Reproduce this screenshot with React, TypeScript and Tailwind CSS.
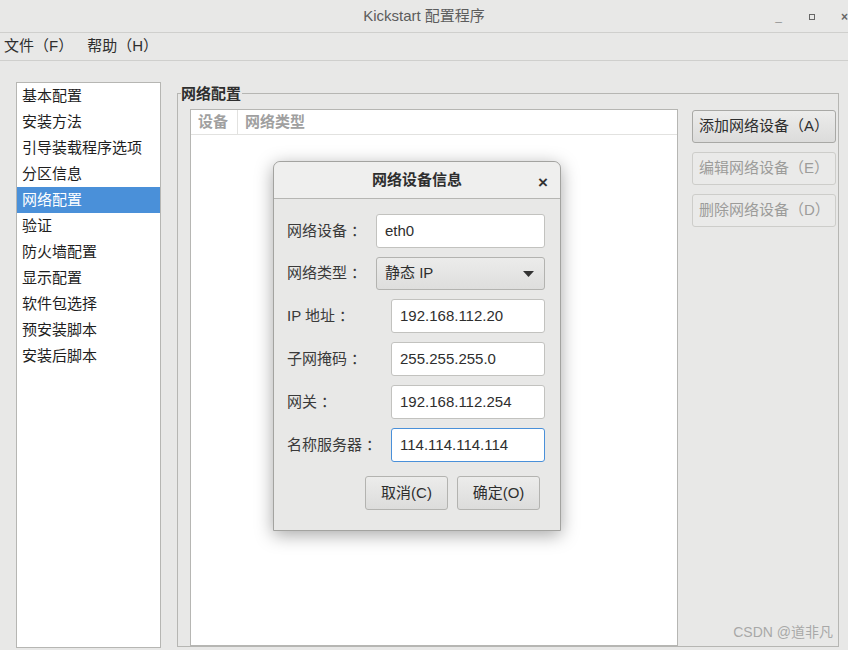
import React from "react";

const font = { fontFamily: '"Liberation Sans", "Noto Sans CJK SC", sans-serif' };

const sections = [
  "基本配置",
  "安装方法",
  "引导装载程序选项",
  "分区信息",
  "网络配置",
  "验证",
  "防火墙配置",
  "显示配置",
  "软件包选择",
  "预安装脚本",
  "安装后脚本",
];

const Field = ({ label, value, wide, focused }: { label: string; value: string; wide?: boolean; focused?: boolean }) => (
  <div className="flex items-center h-[34px]">
    <span className="flex-1 text-[15px] text-[#3a3a3a]">
      {label}
      <span className="ml-[4px]">：</span>
    </span>
    <div
      className={`h-[34px] ${wide ? "w-[169px]" : "w-[154px]"} bg-white rounded-[3px] border flex items-center pl-[8px] text-[15px] text-[#2e2e2e] ${
        focused ? "border-[#4a90d9]" : "border-[#c2c2bf]"
      }`}
    >
      {value}
    </div>
  </div>
);

export default function App() {
  return (
    <div className="relative w-[848px] h-[650px] overflow-hidden bg-[#e8e8e7] text-[#2e3436]" style={font}>
      {/* title bar */}
      <div className="relative h-[33px] border-b border-[#cfcfcd] flex items-center justify-center">
        <span className="text-[15px] text-[#5c5c5c]">Kickstart 配置程序</span>
        <div className="absolute -right-[13px] top-0 h-[33px] flex items-center text-[#666] text-[12px]">
          <span className="w-[33px] text-center font-bold">_</span>
          <span className="w-[33px] flex justify-center">
            <span className="block w-[6px] h-[6px] border-[1.5px] border-[#666]" />
          </span>
          <span className="w-[33px] text-center font-bold">×</span>
        </div>
      </div>

      {/* menu bar */}
      <div className="h-[28px] border-b border-[#cfcfcd] flex items-center gap-[14px] pl-[4px] text-[15px] text-[#2e2e2e]">
        <span>文件（F）</span>
        <span>帮助（H）</span>
      </div>

      {/* body */}
      <div className="flex pl-[16px] pt-[21px]">
        <div className="w-[145px] h-[566px] bg-white border border-[#b6b6b3]">
          {sections.map((s, i) => (
            <div
              key={s}
              className={`h-[26px] flex items-center pl-[5px] text-[15px] ${
                i === 4 ? "bg-[#4a90d9] text-white" : "text-[#1e1e1e]"
              }`}
            >
              {s}
            </div>
          ))}
        </div>

        <div className="relative ml-[16px] mt-[11px] w-[662px] h-[554px] border border-[#b6b6b3] flex pl-[12px] pt-[15px]">
          <span className="absolute -top-[11px] left-[3px] bg-[#e8e8e7] pr-[1px] text-[15px] font-bold text-[#2e2e2e]">
            网络配置
          </span>
          <div className="w-[488px] h-[538px] bg-white border border-[#b6b6b3] border-b-2">
            <div className="h-[25px] flex items-center border-b border-[#e2e2e0] text-[15px] font-bold text-[#a0a0a0]">
              <span className="w-[47px] h-full flex items-center pl-[7px] border-r border-[#e2e2e0]">设备</span>
              <span className="pl-[7px]">网络类型</span>
            </div>
          </div>
          <div className="ml-[14px] mt-[1px] w-[144px] flex flex-col gap-[9px]">
            <div className="h-[33px] rounded-[3px] border border-[#a8a8a5] bg-gradient-to-b from-[#ececeb] to-[#dcdcdb] flex items-center pl-[6px] text-[15px] text-[#2e2e2e]">
              添加网络设备（A）
            </div>
            <div className="h-[33px] rounded-[3px] border border-[#cdcdca] bg-[#eaeae9] flex items-center pl-[6px] text-[15px] text-[#9c9c9a]">
              编辑网络设备（E）
            </div>
            <div className="h-[33px] rounded-[3px] border border-[#cdcdca] bg-[#eaeae9] flex items-center pl-[6px] text-[15px] text-[#9c9c9a]">
              删除网络设备（D）
            </div>
          </div>
        </div>
      </div>

      {/* dialog */}
      <div className="absolute left-[273px] top-[161px] w-[288px] h-[370px] bg-[#e8e8e7] border border-[#a3a3a0] rounded-t-[7px] shadow-[0_4px_18px_rgba(0,0,0,0.35)] flex flex-col">
        <div className="relative h-[37px] rounded-t-[7px] bg-[#efefee] border-b border-[#b6b6b3] flex items-center justify-center">
          <span className="text-[15px] font-bold text-[#2e2e2e]">网络设备信息</span>
          <span className="absolute right-[12px] top-[8px] text-[17px] font-bold text-[#333]">×</span>
        </div>
        <div className="flex flex-col gap-[9px] pl-[13px] pr-[15px] pt-[15px]">
          <Field label="网络设备" value="eth0" wide />
          <div className="flex items-center h-[33px]">
            <span className="flex-1 text-[15px] text-[#3a3a3a]">
              网络类型<span className="ml-[4px]">：</span>
            </span>
            <div className="h-[33px] w-[169px] rounded-[3px] border border-[#b3b3b0] bg-gradient-to-b from-[#ececeb] to-[#dededd] flex items-center pl-[8px] pr-[10px] text-[15px] text-[#2e2e2e]">
              <span className="flex-1">静态 IP</span>
              <svg width="11" height="6" viewBox="0 0 11 6">
                <path d="M0 0 L11 0 L5.5 6 Z" fill="#333" />
              </svg>
            </div>
          </div>
          <Field label="IP 地址" value="192.168.112.20" />
          <Field label="子网掩码" value="255.255.255.0" />
          <Field label="网关" value="192.168.112.254" />
          <Field label="名称服务器" value="114.114.114.114" focused />
        </div>
        <div className="flex justify-end gap-[9px] pr-[20px] pt-[14px]">
          <div className="w-[83px] h-[34px] rounded-[3px] border border-[#b3b3b0] bg-gradient-to-b from-[#ececeb] to-[#dcdcdb] flex items-center justify-center text-[15px] text-[#2e2e2e]">
            取消(C)
          </div>
          <div className="w-[83px] h-[34px] rounded-[3px] border border-[#b3b3b0] bg-gradient-to-b from-[#ececeb] to-[#dcdcdb] flex items-center justify-center text-[15px] text-[#2e2e2e]">
            确定(O)
          </div>
        </div>
      </div>

      <span className="absolute right-[15px] bottom-[7px] text-[14px] text-[#a8a8a8]">CSDN @道非凡</span>
    </div>
  );
}
